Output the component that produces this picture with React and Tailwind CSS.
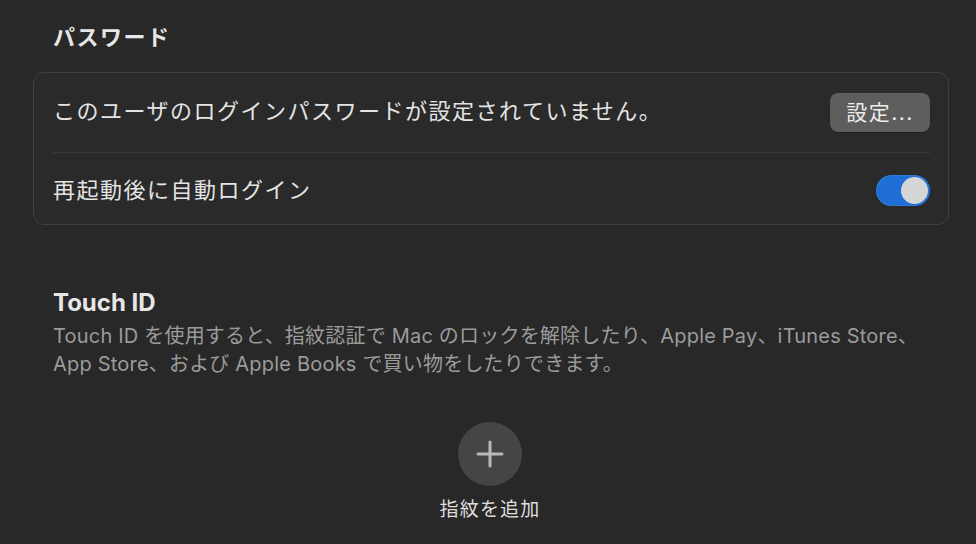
import React from 'react';

const font = { fontFamily: '"Inter", "Noto Sans CJK JP", sans-serif' };

function Toggle() {
  return (
    <div className="relative w-[54px] h-[31px] rounded-full bg-[#1f6fd6] shadow-[inset_0_0_0_1px_rgba(255,255,255,0.08)]">
      <div className="absolute right-[2px] top-[2px] w-[27px] h-[27px] rounded-full bg-[#d6d6d6]" />
    </div>
  );
}

export default function App() {
  return (
    <div className="w-[976px] h-[544px] bg-[#282828] overflow-hidden text-[#e4e4e4]" style={font}>
      <div className="pl-[33px] pr-[27px] pt-[21px]">
        <h2 className="pl-[20px] text-[22px] font-bold leading-[32px] tracking-[1.5px] text-[#e6e6e6]">パスワード</h2>

        <div className="mt-[19px] rounded-[11px] border border-[#3f3f3f] bg-[#2a2a2a] pl-[19px] pr-[18px]">
          <div className="flex items-center justify-between h-[80px] border-b border-[#3a3a3a]">
            <span className="text-[22px] leading-none tracking-[1.5px] pb-[3px]">このユーザのログインパスワードが設定されていません。</span>
            <button className="h-[39px] w-[100px] rounded-[8px] bg-[#5d5d5d] text-[21px] tracking-[1.5px] text-[#ececec] shadow-[0_1px_1px_rgba(0,0,0,0.3)]">
              設定...
            </button>
          </div>
          <div className="flex items-center justify-between h-[71px] pt-[3px]">
            <span className="text-[22px] leading-none tracking-[1.5px]">再起動後に自動ログイン</span>
            <Toggle />
          </div>
        </div>

        <div className="pl-[20px] mt-[61px]">
          <h2 className="text-[24px] font-bold leading-[34px] text-[#e6e6e6]">Touch ID</h2>
          <p className="mt-[2px] text-[20px] leading-[28px] tracking-[0.2px] text-[#9b9b9b]">
            Touch ID を使用すると、指紋認証で Mac のロックを解除したり、Apple Pay、iTunes Store、
            <br />
            App Store、および Apple Books で買い物をしたりできます。
          </p>
        </div>

        <div className="flex flex-col items-center mt-[44px] pr-[2px]">
          <div className="w-[64px] h-[64px] rounded-full bg-[#454545] flex items-center justify-center">
            <svg width="30" height="30" viewBox="0 0 30 30">
              <path d="M15 3v24M3 15h24" stroke="#b9b9b9" strokeWidth="3" strokeLinecap="round" />
            </svg>
          </div>
          <span className="mt-[11px] text-[19px] leading-[26px] tracking-[1.2px] text-[#dedede]">指紋を追加</span>
        </div>
      </div>
    </div>
  );
}
